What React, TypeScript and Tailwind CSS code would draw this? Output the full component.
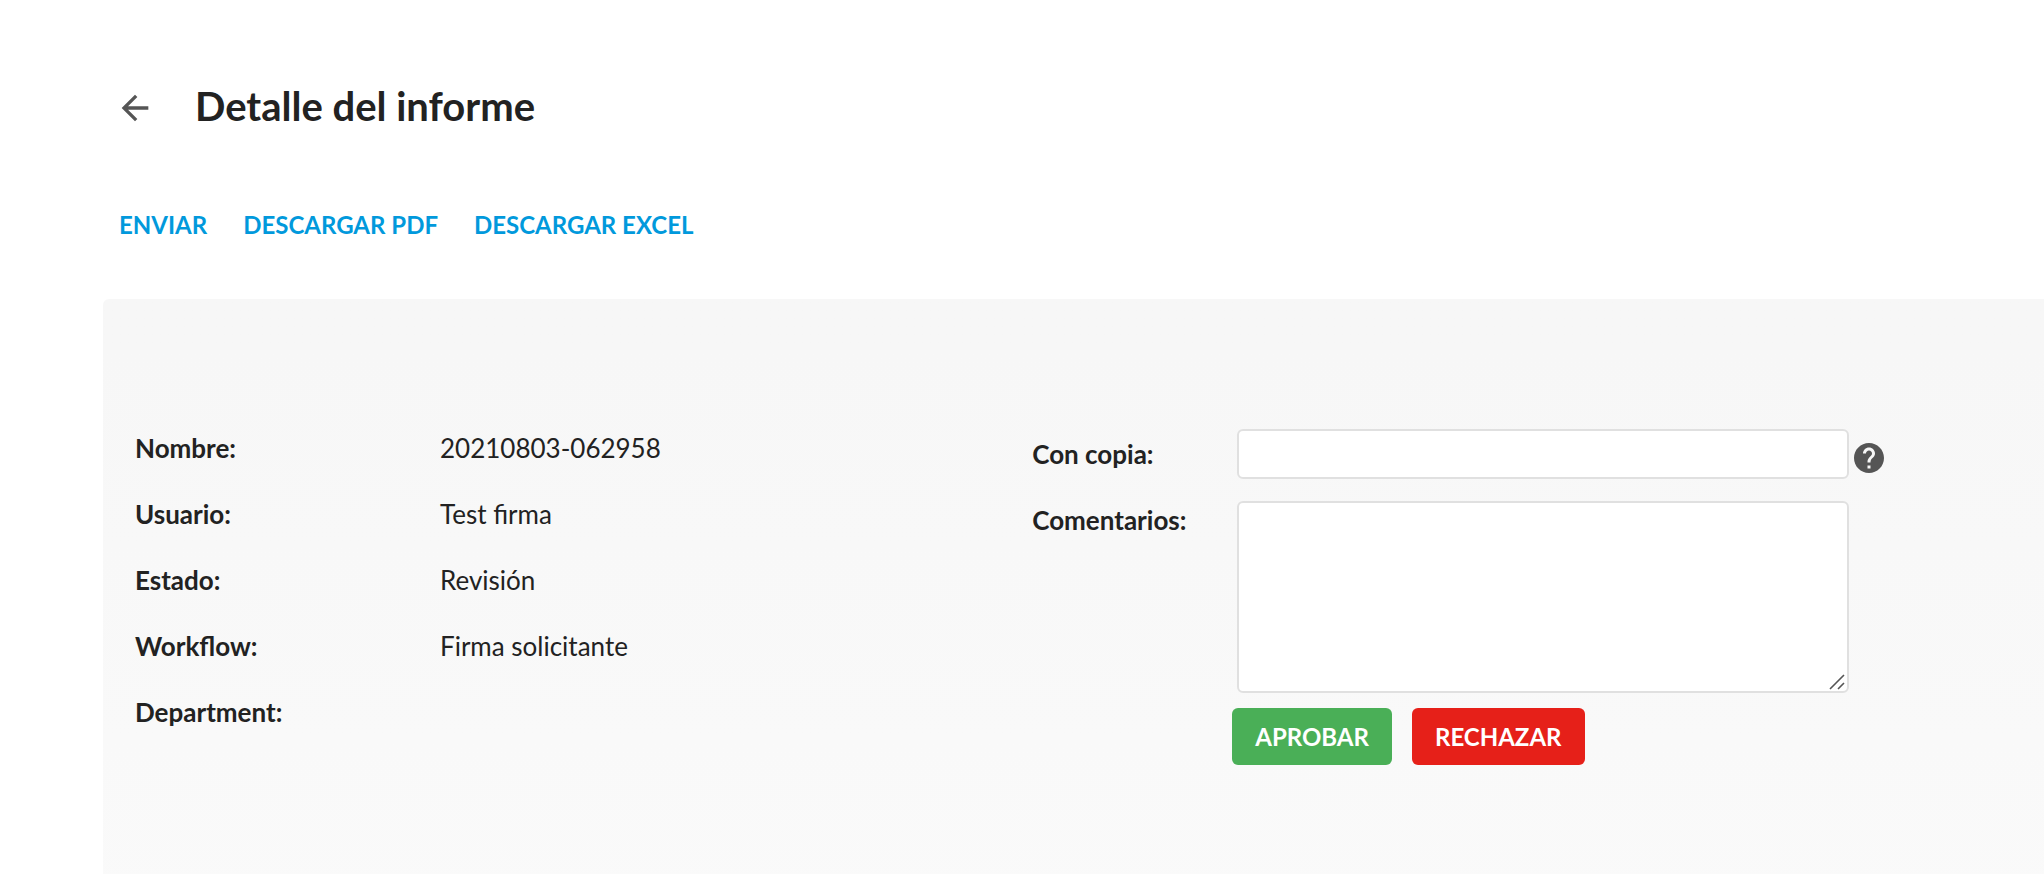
import React from 'react'
import { MdArrowBack, MdHelp } from 'react-icons/md'

const actions = ['Enviar', 'Descargar PDF', 'Descargar Excel']

const details = [
  { label: 'Nombre:', value: '20210803-062958' },
  { label: 'Usuario:', value: 'Test firma' },
  { label: 'Estado:', value: 'Revisión' },
  { label: 'Workflow:', value: 'Firma solicitante' },
  { label: 'Department:', value: '' },
]

function ReportHeader() {
  return (
    <header className="pl-[115px] pt-20">
      <div className="flex items-center gap-10">
        <button type="button" aria-label="Volver" className="mt-1 text-[#555555]">
          <MdArrowBack size={40} />
        </button>
        <h1 className="text-[40px] leading-[52px] font-bold">Detalle del informe</h1>
      </div>
      <nav className="mt-[77px] ml-1 flex gap-9 text-[24px] leading-[32px] font-bold text-[#0199dc] uppercase">
        {actions.map((action) => (
          <a key={action} href="#">
            {action}
          </a>
        ))}
      </nav>
    </header>
  )
}

function ReportDetails() {
  return (
    <dl className="-mt-[14px] text-[26px] leading-[66px]">
      {details.map((item) => (
        <div key={item.label} className="flex">
          <dt className="w-[305px] shrink-0 font-bold">{item.label}</dt>
          <dd>{item.value}</dd>
        </div>
      ))}
    </dl>
  )
}

function ReviewForm() {
  return (
    <form className="pr-[157px]">
      <div className="flex items-center">
        <label htmlFor="copy" className="w-[205px] shrink-0 text-[26px] font-bold">
          Con copia:
        </label>
        <input
          id="copy"
          type="text"
          className="h-[50px] min-w-0 flex-1 rounded-md border-2 border-[#e0e0e0] bg-white px-3 text-[24px]"
        />
        <MdHelp size={36} className="mt-2 ml-[2px] shrink-0 text-[#555555]" />
      </div>

      <div className="mt-[22px] flex items-start pr-[38px]">
        <label htmlFor="comments" className="w-[205px] shrink-0 text-[26px] leading-[38px] font-bold">
          Comentarios:
        </label>
        <div className="relative flex-1">
          <textarea
            id="comments"
            className="block h-[192px] w-full resize-none rounded-md border-2 border-[#e0e0e0] bg-white p-3 text-[24px]"
          />
          {/* Resize grip */}
          <svg
            className="pointer-events-none absolute right-1 bottom-[3px] h-4 w-4"
            viewBox="0 0 16 16"
            fill="none"
            stroke="#555555"
            strokeWidth={1.6}
          >
            <path d="M1 15L15 1M9 15L15 9" />
          </svg>
        </div>
      </div>

      <div className="mt-[15px] ml-[200px] flex gap-5 text-[24px] leading-[29px] font-bold text-white uppercase">
        <button type="button" className="rounded-md bg-[#4aaf57] px-[23px] py-[14px] uppercase">
          Aprobar
        </button>
        <button type="button" className="rounded-md bg-[#e62019] px-[23px] py-[14px] uppercase">
          Rechazar
        </button>
      </div>
    </form>
  )
}

export default function App() {
  return (
    <div className="flex min-h-screen flex-col bg-white font-['Lato',sans-serif] text-[#222222]">
      <ReportHeader />
      <main className="mt-[58px] ml-[103px] grid flex-1 grid-cols-[47fr_53fr] items-start rounded-tl-md bg-linear-to-b from-[#f7f7f7] from-8% to-[#fafafa] to-110% pt-[130px] pb-8 pl-8">
        <ReportDetails />
        <ReviewForm />
      </main>
    </div>
  )
}
